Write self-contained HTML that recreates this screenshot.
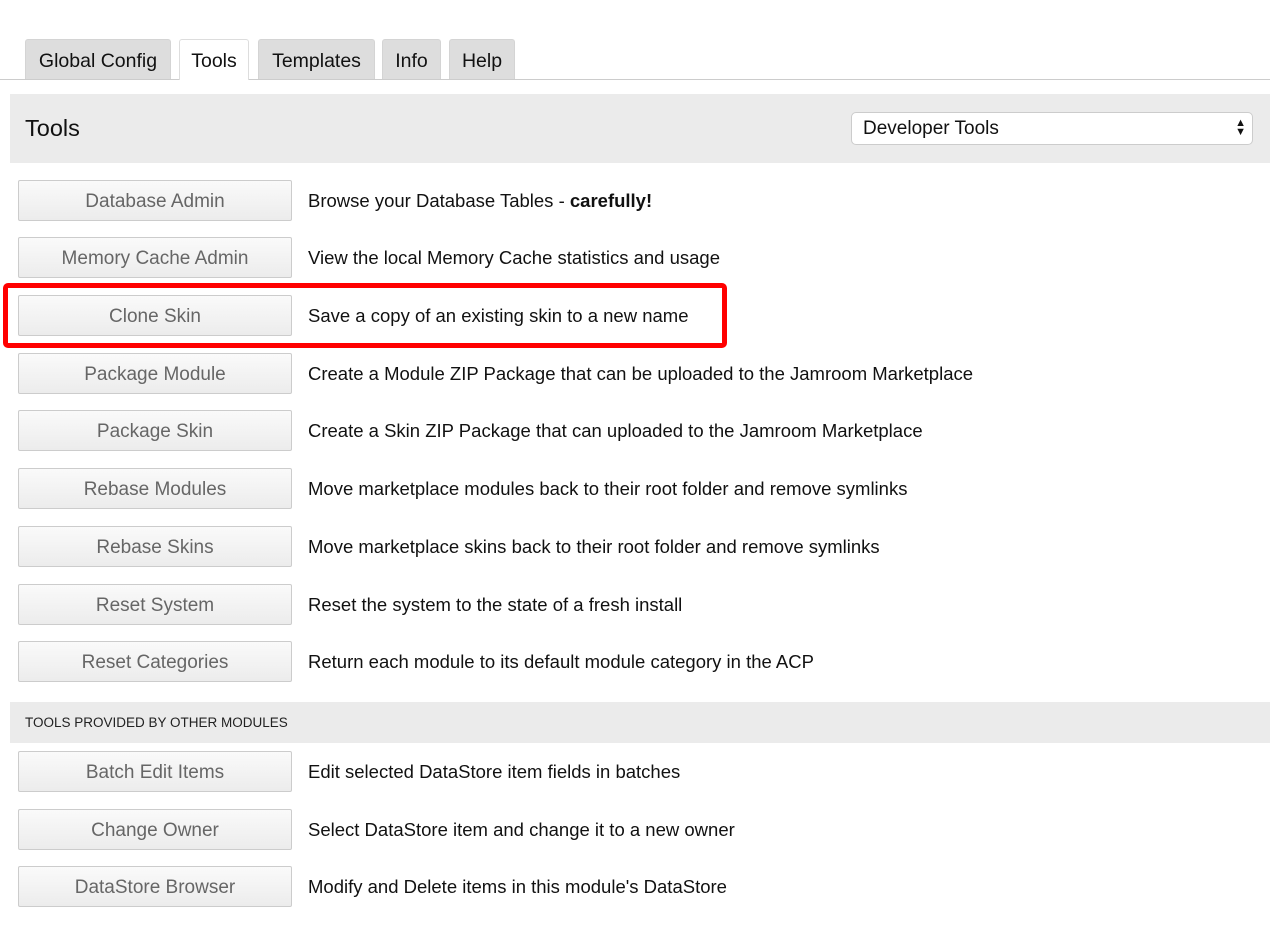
<!DOCTYPE html>
<html><head><meta charset="utf-8"><style>
*{box-sizing:border-box;margin:0;padding:0}
body{width:1280px;height:925px;background:#fff;font-family:"Liberation Sans",sans-serif;color:#111;position:relative;overflow:hidden}
.tabline{position:absolute;left:0;top:79px;width:1270px;height:1px;background:#ccc}
.tab{position:absolute;top:39px;height:40px;background:#ddd;border:1px solid #d4d4d4;border-bottom:none;border-radius:3px 3px 0 0;font-size:19.5px;line-height:43px;text-align:center;color:#111}
.tab.on{background:#fff;height:41px;border-color:#ddd}
.hdr{position:absolute;left:10px;top:94px;width:1260px;height:69px;background:#ebebeb}
.hdr h1{position:absolute;left:15px;top:21px;font-size:23.5px;font-weight:normal}
.sel{position:absolute;left:851px;top:112px;width:402px;height:33px;background:#fff;border:1px solid #ccc;border-radius:5px;font-size:19px;line-height:31px;padding-left:11px}
.arr{position:absolute;right:6px;top:6px;font-size:11px;line-height:9px}
.btn{position:absolute;left:18px;width:274px;height:41px;background:linear-gradient(#fafafa,#ececec);border:1px solid #ccc;border-radius:2px;font-size:19px;line-height:41px;text-align:center;color:#666}
.desc{position:absolute;left:308px;font-size:18.5px;line-height:41px;color:#111}
.sec{position:absolute;left:10px;top:702px;width:1260px;height:41px;background:#ebebeb;font-size:13.5px;line-height:42px;padding-left:15px;color:#222}
.red{position:absolute;left:3px;top:283px;width:724px;height:65px;border:5px solid #f00;border-radius:5px}
</style></head><body>
<div class="tabline"></div>
<div class="tab" style="left:25px;width:146px">Global Config</div>
<div class="tab on" style="left:179px;width:70px">Tools</div>
<div class="tab" style="left:258px;width:117px">Templates</div>
<div class="tab" style="left:382px;width:59px">Info</div>
<div class="tab" style="left:449px;width:66px">Help</div>
<div class="hdr"><h1>Tools</h1></div>
<div class="sel">Developer Tools<span class="arr">▲<br>▼</span></div>

<div class="btn" style="top:180px">Database Admin</div><div class="desc" style="top:180px">Browse your Database Tables - <b>carefully!</b></div>
<div class="btn" style="top:237px">Memory Cache Admin</div><div class="desc" style="top:237px">View the local Memory Cache statistics and usage</div>
<div class="btn" style="top:295px">Clone Skin</div><div class="desc" style="top:295px">Save a copy of an existing skin to a new name</div>
<div class="btn" style="top:353px">Package Module</div><div class="desc" style="top:353px">Create a Module ZIP Package that can be uploaded to the Jamroom Marketplace</div>
<div class="btn" style="top:410px">Package Skin</div><div class="desc" style="top:410px">Create a Skin ZIP Package that can uploaded to the Jamroom Marketplace</div>
<div class="btn" style="top:468px">Rebase Modules</div><div class="desc" style="top:468px">Move marketplace modules back to their root folder and remove symlinks</div>
<div class="btn" style="top:526px">Rebase Skins</div><div class="desc" style="top:526px">Move marketplace skins back to their root folder and remove symlinks</div>
<div class="btn" style="top:584px">Reset System</div><div class="desc" style="top:584px">Reset the system to the state of a fresh install</div>
<div class="btn" style="top:641px">Reset Categories</div><div class="desc" style="top:641px">Return each module to its default module category in the ACP</div>
<div class="sec">TOOLS PROVIDED BY OTHER MODULES</div>
<div class="btn" style="top:751px">Batch Edit Items</div><div class="desc" style="top:751px">Edit selected DataStore item fields in batches</div>
<div class="btn" style="top:809px">Change Owner</div><div class="desc" style="top:809px">Select DataStore item and change it to a new owner</div>
<div class="btn" style="top:866px">DataStore Browser</div><div class="desc" style="top:866px">Modify and Delete items in this module's DataStore</div>
<div class="red"></div>
</body></html>
